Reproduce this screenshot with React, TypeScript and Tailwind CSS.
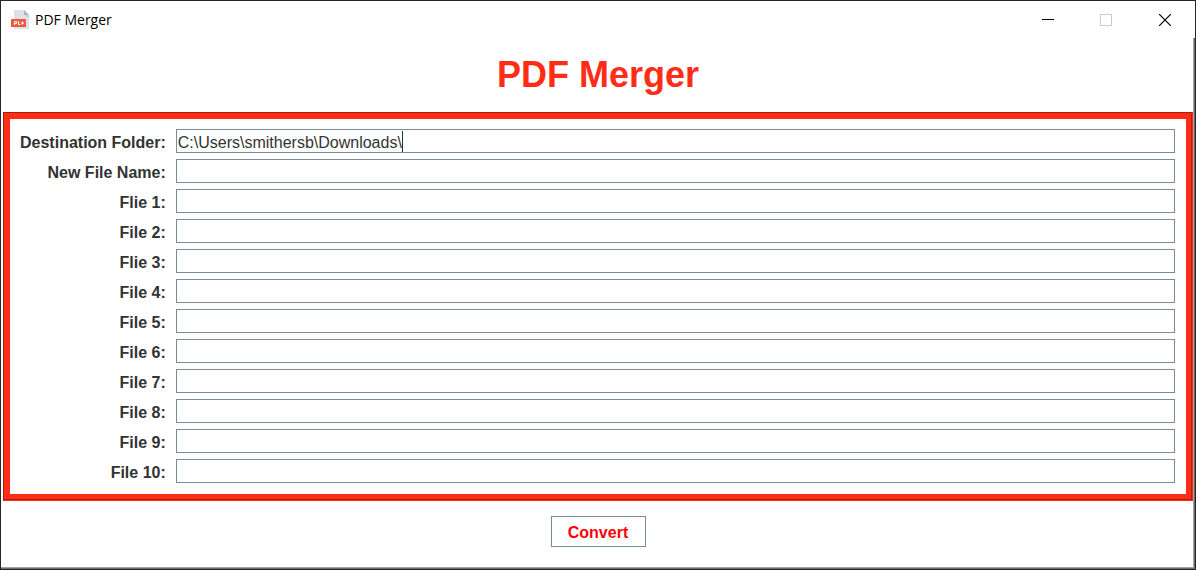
import React, { useState } from "react";

const fields = [
  "Destination Folder:",
  "New File Name:",
  "Flie 1:",
  "File 2:",
  "Flie 3:",
  "File 4:",
  "File 5:",
  "File 6:",
  "File 7:",
  "File 8:",
  "File 9:",
  "File 10:",
];

function PdfIcon() {
  return (
    <svg width="20" height="20" viewBox="0 0 20 20" aria-hidden="true">
      <path d="M3 0H13L18 5V19H3Z" fill="#dde1e5" />
      <path d="M13 0L18 5H13Z" fill="#a9b3bc" />
      <path d="M14 5H18V9Z" fill="#cbd1d7" />
      <rect x="0" y="9" width="15" height="8" rx="0.5" fill="#f15642" />
      <path
        d="M3.5 15V11.5H5.5V13.5H3.5M7.5 11V14.5H9.5M11.5 11.5V14.5M10 13H13"
        fill="none"
        stroke="#fff"
        strokeWidth="1"
      />
    </svg>
  );
}

function TitleBar() {
  return (
    <header className="flex h-[37px] items-center pl-2.5">
      <PdfIcon />
      <span className="ml-1 grow pt-px font-['Open_Sans',sans-serif] text-sm text-black">PDF Merger</span>
      <div className="flex">
        <button type="button" aria-label="Minimize" className="flex h-9 w-[58px] items-center justify-center">
          <svg width="12" height="12" viewBox="0 0 12 12" shapeRendering="crispEdges">
            <path d="M0 5.5H12" stroke="#000" />
          </svg>
        </button>
        <button type="button" aria-label="Maximize" disabled className="flex h-9 w-[58px] items-center justify-center">
          <svg width="12" height="12" viewBox="0 0 12 12" shapeRendering="crispEdges">
            <rect x="0.5" y="0.5" width="11" height="11" fill="none" stroke="#ccc" />
          </svg>
        </button>
        <button type="button" aria-label="Close" className="flex h-9 w-[60px] items-center justify-center">
          <svg width="12" height="12" viewBox="0 0 12 12">
            <path d="M0 0L12 12M12 0L0 12" stroke="#000" strokeWidth="1.2" />
          </svg>
        </button>
      </div>
    </header>
  );
}

export default function App() {
  const [values, setValues] = useState<string[]>(
    fields.map((_, i) => (i === 0 ? "C:\\Users\\smithersb\\Downloads\\" : "")),
  );
  const [edited, setEdited] = useState(false);

  return (
    <div className="flex min-h-screen flex-col border border-[#26262a] bg-white font-['Liberation_Sans',Arial,sans-serif]">
      <TitleBar />
      <div className="flex grow flex-col border-r border-b border-[#6b6b6b]">
        <main className="flex grow flex-col border-r border-b border-[#a3a3a3] pl-0.5">
          <h1 className="pt-4 pb-4 text-center text-4xl leading-[42px] font-bold text-[#ff2d16]">PDF Merger</h1>
          <form className="flex flex-col" onSubmit={(e) => e.preventDefault()}>
            <div className="border border-t-[#a81c12] border-r-[#ff2d16] border-b-[#ff2d16] border-l-[#a81c12]">
              <div className="border border-t-[#ff2d16] border-r-[#b31f0f] border-b-[#b31f0f] border-l-[#ff2d16]">
                <div className="grid grid-cols-[auto_1fr] items-center gap-x-2.5 gap-y-1.5 border-5 border-[#ff2d16] pt-2.5 pr-[11px] pb-[11px] pl-2.5">
                  {fields.map((label, i) => (
                    <React.Fragment key={label}>
                      <label htmlFor={`field-${i}`} className="pt-1 text-right text-base leading-5 font-bold text-[#333]">
                        {label}
                      </label>
                      <div className="relative flex h-6">
                        <input
                          id={`field-${i}`}
                          type="text"
                          value={values[i]}
                          onChange={(e) => {
                            setEdited(true);
                            setValues(values.map((v, j) => (j === i ? e.target.value : v)));
                          }}
                          className="h-6 w-full border border-[#7a8a99] bg-white px-px pt-1 text-base leading-5 text-[#333] outline-none"
                        />
                        {i === 0 && !edited && (
                          <span className="pointer-events-none absolute top-0.5 left-[226px] h-[21px] w-px bg-[#333]" />
                        )}
                      </div>
                    </React.Fragment>
                  ))}
                </div>
              </div>
            </div>
            <button
              type="submit"
              className="mt-[15px] mb-5 w-[95px] self-center border border-[#7a8a99] bg-white pt-1.5 pb-1 text-base leading-[19px] font-bold text-[#ff0000]"
            >
              Convert
            </button>
          </form>
        </main>
      </div>
    </div>
  );
}
